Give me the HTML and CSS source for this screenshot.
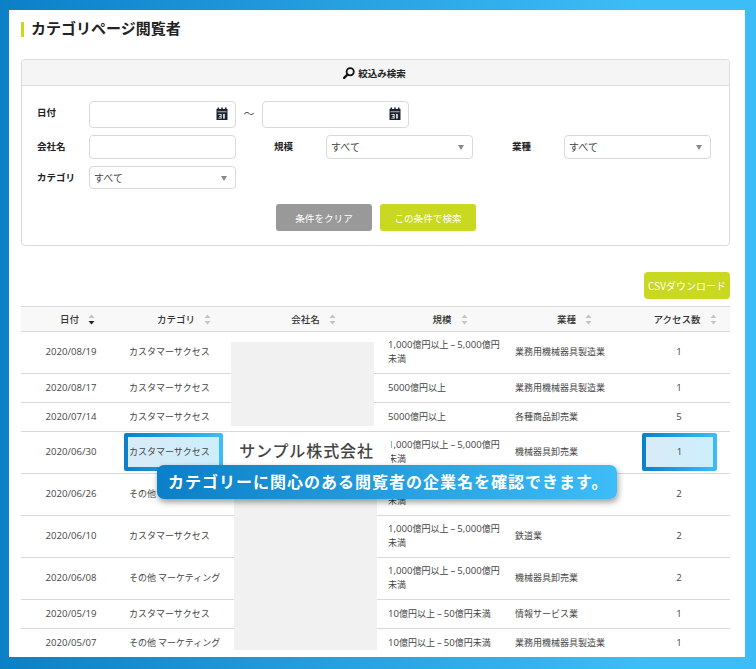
FILE: index.html
```html
<!DOCTYPE html>
<html lang="ja">
<head>
<meta charset="utf-8">
<title>カテゴリページ閲覧者</title>
<link rel="stylesheet" href="styles.css">
</head>
<body>
<svg class="defs" width="0" height="0" aria-hidden="true">
  <symbol id="cal" viewBox="0 0 12 13">
    <rect x="0.5" y="2" width="11" height="11" fill="#1b2230"/>
    <rect x="1.5" y="0.5" width="1.6" height="2" fill="#1b2230"/>
    <rect x="5.2" y="0.5" width="1.6" height="2" fill="#1b2230"/>
    <rect x="8.9" y="0.5" width="1.6" height="2" fill="#1b2230"/>
    <rect x="1.5" y="4.4" width="9" height="0.8" fill="#dcdcdc"/>
    <path d="M2.4 7 H5.6 V11.6 H2.4 V10.8 H4.7 V9.7 H3.2 V8.9 H4.7 V7.8 H2.4 Z" fill="#fff"/>
    <rect x="7.2" y="7" width="1.5" height="4.6" fill="#fff"/>
  </symbol>
  <symbol id="sort" viewBox="0 0 7 11">
    <path d="M3.5 0.5 L6.5 4 H0.5 Z" fill="#c4c4c4"/>
    <path d="M3.5 10.5 L6.5 7 H0.5 Z" fill="#c4c4c4"/>
  </symbol>
  <symbol id="sort-on" viewBox="0 0 7 11">
    <path d="M3.5 0.5 L6.5 4 H0.5 Z" fill="#c4c4c4"/>
    <path d="M3.5 10.5 L6.5 7 H0.5 Z" fill="#222"/>
  </symbol>
</svg>
<main class="card">
  <h1 class="title">カテゴリページ閲覧者</h1>

  <section class="panel">
    <header class="panel-head">
      <svg class="search-icon" viewBox="0 0 12 12" width="12" height="12" aria-hidden="true">
        <circle cx="7.2" cy="4.8" r="3.6" fill="none" stroke="#111" stroke-width="1.8"/>
        <path d="M4.5 7.5 L1.2 10.8" stroke="#111" stroke-width="2.4" stroke-linecap="round"/>
      </svg>
      <span>絞込み検索</span>
    </header>
    <div class="panel-body">
      <div class="form-row row-date">
        <label class="lbl">日付</label>
        <div class="field date"><svg class="cal" aria-hidden="true"><use href="#cal"/></svg></div>
        <span class="tilde">～</span>
        <div class="field date"><svg class="cal" aria-hidden="true"><use href="#cal"/></svg></div>
      </div>
      <div class="form-row row-company">
        <label class="lbl">会社名</label>
        <div class="field company"></div>
        <label class="lbl lbl-mid">規模</label>
        <div class="field select">すべて<i class="arrow"></i></div>
        <label class="lbl lbl-end">業種</label>
        <div class="field select">すべて<i class="arrow"></i></div>
      </div>
      <div class="form-row row-cat">
        <label class="lbl">カテゴリ</label>
        <div class="field select">すべて<i class="arrow"></i></div>
      </div>
      <div class="actions">
        <button class="btn btn-gray">条件をクリア</button>
        <button class="btn btn-lime">この条件で検索</button>
      </div>
    </div>
  </section>

  <div class="csv-row"><button class="btn-csv">CSVダウンロード</button></div>

  <div class="table-wrap">
    <table class="data">
      <colgroup>
        <col class="c1"><col class="c2"><col class="c3"><col class="c4"><col class="c5"><col class="c6">
      </colgroup>
      <thead>
        <tr>
          <th class="th-date">日付<svg class="sort" aria-hidden="true"><use href="#sort-on"/></svg></th>
          <th class="th-cat">カテゴリ<svg class="sort" aria-hidden="true"><use href="#sort"/></svg></th>
          <th class="th-co">会社名<svg class="sort" aria-hidden="true"><use href="#sort"/></svg></th>
          <th class="th-size">規模<svg class="sort" aria-hidden="true"><use href="#sort"/></svg></th>
          <th class="th-ind">業種<svg class="sort" aria-hidden="true"><use href="#sort"/></svg></th>
          <th class="th-num">アクセス数<svg class="sort" aria-hidden="true"><use href="#sort"/></svg></th>
        </tr>
      </thead>
      <tbody>
        <tr class="tall"><td class="n">2020/08/19</td><td class="cat">カスタマーサクセス</td><td></td><td class="size"><span class="n">1,000</span>億円以上 <span class="n">–</span> <span class="n">5,000</span>億円未満</td><td>業務用機械器具製造業</td><td class="n">1</td></tr>
        <tr><td class="n">2020/08/17</td><td class="cat">カスタマーサクセス</td><td></td><td class="size"><span class="n">5000</span>億円以上</td><td>業務用機械器具製造業</td><td class="n">1</td></tr>
        <tr><td class="n">2020/07/14</td><td class="cat">カスタマーサクセス</td><td></td><td class="size"><span class="n">5000</span>億円以上</td><td>各種商品卸売業</td><td class="n">5</td></tr>
        <tr class="tall"><td class="n">2020/06/30</td><td class="cat">カスタマーサクセス</td><td></td><td class="size"><span class="n">1,000</span>億円以上 <span class="n">–</span> <span class="n">5,000</span>億円未満</td><td>機械器具卸売業</td><td class="n">1</td></tr>
        <tr class="tall"><td class="n">2020/06/26</td><td class="cat">その他 マーケティング</td><td></td><td class="size"><span class="n">1,000</span>億円以上 <span class="n">–</span> <span class="n">5,000</span>億円未満</td><td>機械器具卸売業</td><td class="n">2</td></tr>
        <tr class="tall"><td class="n">2020/06/10</td><td class="cat">カスタマーサクセス</td><td></td><td class="size"><span class="n">1,000</span>億円以上 <span class="n">–</span> <span class="n">5,000</span>億円未満</td><td>鉄道業</td><td class="n">2</td></tr>
        <tr class="tall"><td class="n">2020/06/08</td><td class="cat">その他 マーケティング</td><td></td><td class="size"><span class="n">1,000</span>億円以上 <span class="n">–</span> <span class="n">5,000</span>億円未満</td><td>機械器具卸売業</td><td class="n">2</td></tr>
        <tr><td class="n">2020/05/19</td><td class="cat">カスタマーサクセス</td><td></td><td class="size"><span class="n">10</span>億円以上 <span class="n">–</span> <span class="n">50</span>億円未満</td><td>情報サービス業</td><td class="n">1</td></tr>
        <tr><td class="n">2020/05/07</td><td class="cat">その他 マーケティング</td><td></td><td class="size"><span class="n">10</span>億円以上 <span class="n">–</span> <span class="n">50</span>億円未満</td><td>業務用機械器具製造業</td><td class="n">1</td></tr>
      </tbody>
    </table>
    <div class="mask mask-a"></div>
    <div class="mask mask-b"></div>
    <div class="sample">サンプル株式会社</div>
    <div class="hl hl-cat"><span>カスタマーサクセス</span></div>
    <div class="hl hl-num"><span class="n">1</span></div>
    <div class="callout">カテゴリーに関心のある閲覧者の企業名を確認できます。</div>
  </div>
</main>
</body>
</html>
```
FILE: styles.css
```css
* { box-sizing: border-box; }
html, body { margin: 0; height: 669px; overflow: hidden; }
body {
  background: linear-gradient(90deg, #0b80c7 0%, #3dbdf8 85%, #3dbdf8 100%);
  padding: 10px 11px 12px 9px;
  font-family: "Noto Sans CJK JP", "Open Sans", sans-serif;
  color: #333;
}
.defs { position: absolute; }
.card {
  background: #fff;
  height: 647px;
  padding: 12px 15px 7px 12px;
  display: flex;
  flex-direction: column;
}
.title {
  margin: 0;
  height: 15px;
  padding-left: 7px;
  border-left: 3px solid #c9d821;
  font-size: 15px;
  line-height: 11px;
  font-weight: 700;
  color: #222;
}
.panel {
  margin-top: 22px;
  height: 187px;
  border: 1px solid #dcdcdc;
  border-radius: 4px;
  flex: none;
}
.panel-head {
  height: 26px;
  padding-right: 2px;
  background: #f5f5f5;
  border-bottom: 1px solid #dcdcdc;
  border-radius: 4px 4px 0 0;
  display: flex;
  align-items: center;
  justify-content: center;
  gap: 3px;
  font-size: 9.5px;
  font-weight: 700;
  color: #222;
}
.panel-body { padding: 15px 18px 0 15px; }
.form-row { display: flex; align-items: center; }
.row-date { height: 27px; }
.row-company { height: 24px; margin-top: 7px; }
.row-cat { height: 23px; margin-top: 7px; }
.lbl {
  width: 52px;
  flex: none;
  font-size: 9.5px;
  font-weight: 700;
  color: #222;
}
.row-date .lbl { margin-bottom: 5px; }
.row-company .lbl { margin-bottom: 3px; }
.row-cat .lbl { margin-bottom: 2px; }
.lbl-mid { margin-left: 38px; }
.lbl-end { margin-left: 39px; }
.field {
  position: relative;
  width: 147px;
  height: 100%;
  flex: none;
  background: #fff;
  border: 1px solid #d9d9d9;
  border-radius: 4px;
  font-size: 10px;
  line-height: 21px;
  padding-left: 4px;
  color: #444;
}
.tilde {
  width: 26px;
  flex: none;
  margin-bottom: 3px;
  text-align: center;
  font-size: 11px;
  color: #555;
}
.cal {
  position: absolute;
  right: 7px;
  top: 5px;
  width: 12px;
  height: 13px;
}
.arrow {
  position: absolute;
  right: 8px;
  top: 9px;
  border-left: 3px solid transparent;
  border-right: 3px solid transparent;
  border-top: 5px solid #888;
}
.actions {
  display: flex;
  justify-content: center;
  gap: 8px;
  margin-top: 15px;
  padding-left: 4px;
}
.btn {
  width: 96px;
  height: 27px;
  border: 0;
  border-radius: 3px;
  color: #fff;
  font: 9.6px "Noto Sans CJK JP", sans-serif;
  padding: 0;
}
.btn-gray { background: #999; }
.btn-lime { background: #c9d821; }
.csv-row {
  display: flex;
  justify-content: flex-end;
  margin-top: 26px;
  flex: none;
}
.btn-csv {
  width: 86px;
  height: 27px;
  border: 0;
  border-radius: 4px;
  background: #c9d821;
  color: #fff;
  font: 10px "Noto Sans CJK JP", sans-serif;
  padding: 0;
}
.table-wrap {
  position: relative;
  margin-top: 7px;
  flex: 1;
  overflow: hidden;
}
.data {
  width: 709px;
  table-layout: fixed;
  border-collapse: collapse;
  font-size: 9px;
  color: #444;
}
.c1 { width: 100px; }
.c2 { width: 102px; }
.c3 { width: 158px; }
.c4 { width: 126px; }
.c5 { width: 121px; }
.c6 { width: 102px; }
.data th {
  height: 25px;
  background: #f8f8f8;
  border-top: 1px solid #d9d9d9;
  border-bottom: 1px solid #d9d9d9;
  font-size: 9.5px;
  font-weight: 500;
  color: #333;
  padding: 0 0 0 6px;
  text-align: center;
}
.data .th-date { padding-left: 13px; }
.data .th-cat { padding-left: 24px; }
.data .th-co { padding-left: 23px; }
.data .th-size { padding-left: 12px; }
.data .th-ind { padding-left: 14px; }
.data .th-num { padding-left: 12px; }
.sort {
  width: 7px;
  height: 11px;
  margin-left: 9px;
  vertical-align: -2px;
}
.data td {
  height: 29px;
  border-bottom: 1px solid #d9d9d9;
  padding: 0 8px 1px;
  line-height: 14px;
}
.data tr.tall td { height: 42px; }
.data td:first-child, .data td:last-child { text-align: center; }
.data td.cat { padding-right: 0; }
.data td.size { padding-left: 7px; padding-right: 6px; }
.n { font-family: "Open Sans", sans-serif; font-size: 9.6px; }
.mask { position: absolute; background: #f1f1f1; }
.mask-a { left: 210px; top: 36px; width: 143px; height: 84px; }
.mask-b { left: 213px; top: 160px; width: 143px; height: 190px; }
.sample {
  position: absolute;
  left: 202px;
  top: 126px;
  width: 168px;
  height: 40px;
  background: #fff;
  padding-right: 1px;
  font-size: 16px;
  font-weight: 500;
  line-height: 36px;
  letter-spacing: 0.9px;
  text-align: center;
  color: #444;
}
.hl {
  position: absolute;
  top: 127px;
  height: 38px;
  padding: 4px;
  border-radius: 2px;
  background: linear-gradient(90deg, #0b7fc7, #3dbdf8);
  font-size: 9px;
}
.hl span {
  display: block;
  height: 30px;
  line-height: 30px;
  background: linear-gradient(90deg, #d8ebf7, #cdeefc);
  color: #444;
}
.hl-cat { left: 103px; width: 99px; }
.hl-cat span { padding-left: 1px; }
.hl-num { left: 621px; width: 75px; text-align: center; }
.callout {
  position: absolute;
  left: 136px;
  top: 159px;
  width: 460px;
  height: 34px;
  border-radius: 7px;
  padding-left: 11px;
  background: linear-gradient(90deg, #0b7fc7, #3dbdf8);
  box-shadow: 1px 3px 6px rgba(0, 0, 0, 0.4);
  color: #fff;
  font-size: 16px;
  font-weight: 700;
  line-height: 32px;
  letter-spacing: 1px;
  white-space: nowrap;
}
```
